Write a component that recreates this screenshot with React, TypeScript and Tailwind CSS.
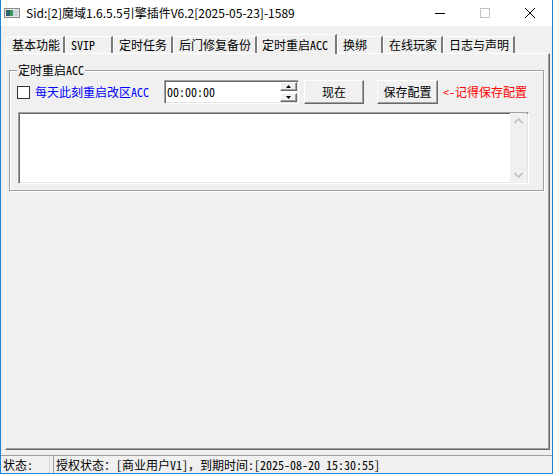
import React from 'react';

const tabs = [
  { label: '基本功能', w: 'w-[59px]' },
  { label: 'SVIP', w: 'w-[48px]' },
  { label: '定时任务', w: 'w-[60px]' },
  { label: '后门修复备份', w: 'w-[84px]' },
  { label: '定时重启ACC', w: 'w-[80px]', active: true },
  { label: '换绑', w: 'w-[46px]' },
  { label: '在线玩家', w: 'w-[60px]' },
  { label: '日志与声明', w: 'w-[72px]' },
];

const raised =
  'border border-t-white border-l-white border-r-[#696969] border-b-[#696969] shadow-[inset_-1px_-1px_0_#a0a0a0] bg-[#f0f0f0]';
const sunken =
  'border border-t-[#a0a0a0] border-l-[#a0a0a0] border-r-white border-b-white shadow-[inset_1px_1px_0_#696969,inset_-1px_-1px_0_#e3e3e3] bg-white';

const AppIcon = () => (
  <svg width="16" height="10" viewBox="0 0 16 10">
    <rect x="0.5" y="0.5" width="15" height="9" fill="#e8e8e8" stroke="#8a8a8a" />
    <rect x="2" y="2" width="4" height="6" fill="#2f5f6f" />
    <rect x="6" y="2" width="3" height="6" fill="#3a9a5a" />
    <rect x="9" y="2" width="5" height="6" fill="#c9d4dc" />
  </svg>
);

const Chevron = ({ up }: { up?: boolean }) => (
  <svg width="9" height="6" viewBox="0 0 9 6">
    <path
      d={up ? 'M0.5 5 L4.5 1 L8.5 5' : 'M0.5 1 L4.5 5 L8.5 1'}
      fill="none"
      stroke="#c0c0c0"
      strokeWidth="1.6"
    />
  </svg>
);

const SpinArrow = ({ up }: { up?: boolean }) => (
  <svg width="5" height="3" viewBox="0 0 5 3">
    <path d={up ? 'M0 3 L2.5 0 L5 3 Z' : 'M0 0 L2.5 3 L5 0 Z'} fill="#000" />
  </svg>
);

export default function App() {
  return (
    <div className="w-[553px] h-[474px] bg-[#f0f0f0] border-x border-b border-[#1883d7] flex flex-col overflow-hidden text-[12px] text-black font-['Noto_Sans_Mono_CJK_SC','Noto_Sans_CJK_SC',sans-serif]">
      {/* title bar */}
      <div className="h-[26px] shrink-0 bg-white flex items-center">
        <div className="ml-[3px] flex items-center">
          <AppIcon />
        </div>
        <div className="ml-[6px] flex-1 text-[12px] leading-[16px] font-['Noto_Sans_CJK_SC',sans-serif]">
          Sid:[2]魔域1.6.5.5引擎插件V6.2[2025-05-23]-1589
        </div>
        <div className="w-[45px] h-full flex items-center justify-center">
          <div className="w-[10px] h-px bg-black" />
        </div>
        <div className="w-[45px] h-full flex items-center justify-center">
          <div className="w-[10px] h-[10px] border border-[#c4c4c4]" />
        </div>
        <div className="w-[45px] h-full flex items-center justify-center">
          <svg width="10" height="10" viewBox="0 0 10 10">
            <path d="M0 0 L10 10 M10 0 L0 10" stroke="#000" strokeWidth="1" />
          </svg>
        </div>
      </div>

      {/* tabs */}
      <div className="h-[27px] shrink-0 flex items-end pl-[5px]">
        {tabs.map((t) =>
          t.active ? (
            <div
              key={t.label}
              className={`${t.w} h-[20px] -mb-px relative z-10 bg-[#f0f0f0] border-l border-t border-white border-r-2 border-r-[#7a7a7a] pl-[4px] pt-[2px] leading-[15px] whitespace-nowrap`}
            >
              {t.label}
            </div>
          ) : (
            <div
              key={t.label}
              className={`${t.w} h-[17px] border-l border-t border-white border-r-2 border-r-[#7a7a7a] pl-[5px] leading-[15px] whitespace-nowrap`}
            >
              {t.label}
            </div>
          )
        )}
      </div>

      {/* tab page */}
      <div className="ml-[4px] w-[545px] h-[397px] shrink-0 border-l border-t border-white border-r border-b border-r-[#696969] border-b-[#696969] shadow-[inset_-1px_-1px_0_#a0a0a0]">
        <div className="ml-[3px] mt-[16px] w-[535px] h-[121px] relative border border-[#a0a0a0] shadow-[1px_1px_0_#fff,inset_1px_1px_0_#fff] pl-[7px] pt-[9px]">
          <span className="absolute left-[7px] top-[-8px] px-[1px] bg-[#f0f0f0] leading-[14px]">
            定时重启ACC
          </span>

          <div className="flex items-center h-[24px]">
            <div className="w-[147px] flex items-center">
              <div className="w-[13px] h-[13px] border border-[#333] bg-white" />
              <span className="ml-[5px] text-[#0000ff] leading-[14px]">每天此刻重启改区ACC</span>
            </div>
            <div className={`w-[135px] h-[24px] flex items-center ${sunken}`}>
              <span className="flex-1 pl-[2px] leading-[14px]">00:00:00</span>
              <div className="flex flex-col gap-[2px] mr-[1px]">
                <div className={`w-[17px] h-[9px] flex items-center justify-center ${raised}`}>
                  <SpinArrow up />
                </div>
                <div className={`w-[17px] h-[9px] flex items-center justify-center ${raised}`}>
                  <SpinArrow />
                </div>
              </div>
            </div>
            <button className={`ml-[5px] w-[60px] h-[24px] flex items-center justify-center leading-[14px] ${raised}`}>
              现在
            </button>
            <button className={`ml-[13px] w-[61px] h-[24px] flex items-center justify-center leading-[14px] ${raised}`}>
              保存配置
            </button>
            <span className="ml-[5px] text-[#ff0000] leading-[14px] whitespace-nowrap">&lt;-记得保存配置</span>
          </div>

          <div className={`ml-[1px] mt-[8px] w-[511px] h-[72px] flex justify-end ${sunken}`}>
            <div className="w-[17px] h-full bg-[#f0f0f0] flex flex-col items-center justify-between py-[5px] mr-[1px]">
              <Chevron up />
              <Chevron />
            </div>
          </div>
        </div>
      </div>

      {/* status bar */}
      <div className="mt-[5px] h-[18px] shrink-0 border-t border-[#a0a0a0] flex items-stretch leading-[14px]">
        <div className="w-[49px] border-r border-[#d8d8d8] pl-[2px] flex items-center">状态:</div>
        <div className="ml-[3px] flex-1 border-l border-[#a0a0a0] pl-[2px] flex items-center whitespace-nowrap">
          授权状态：[商业用户V1]，到期时间:[2025-08-20 15:30:55]
        </div>
      </div>
    </div>
  );
}
